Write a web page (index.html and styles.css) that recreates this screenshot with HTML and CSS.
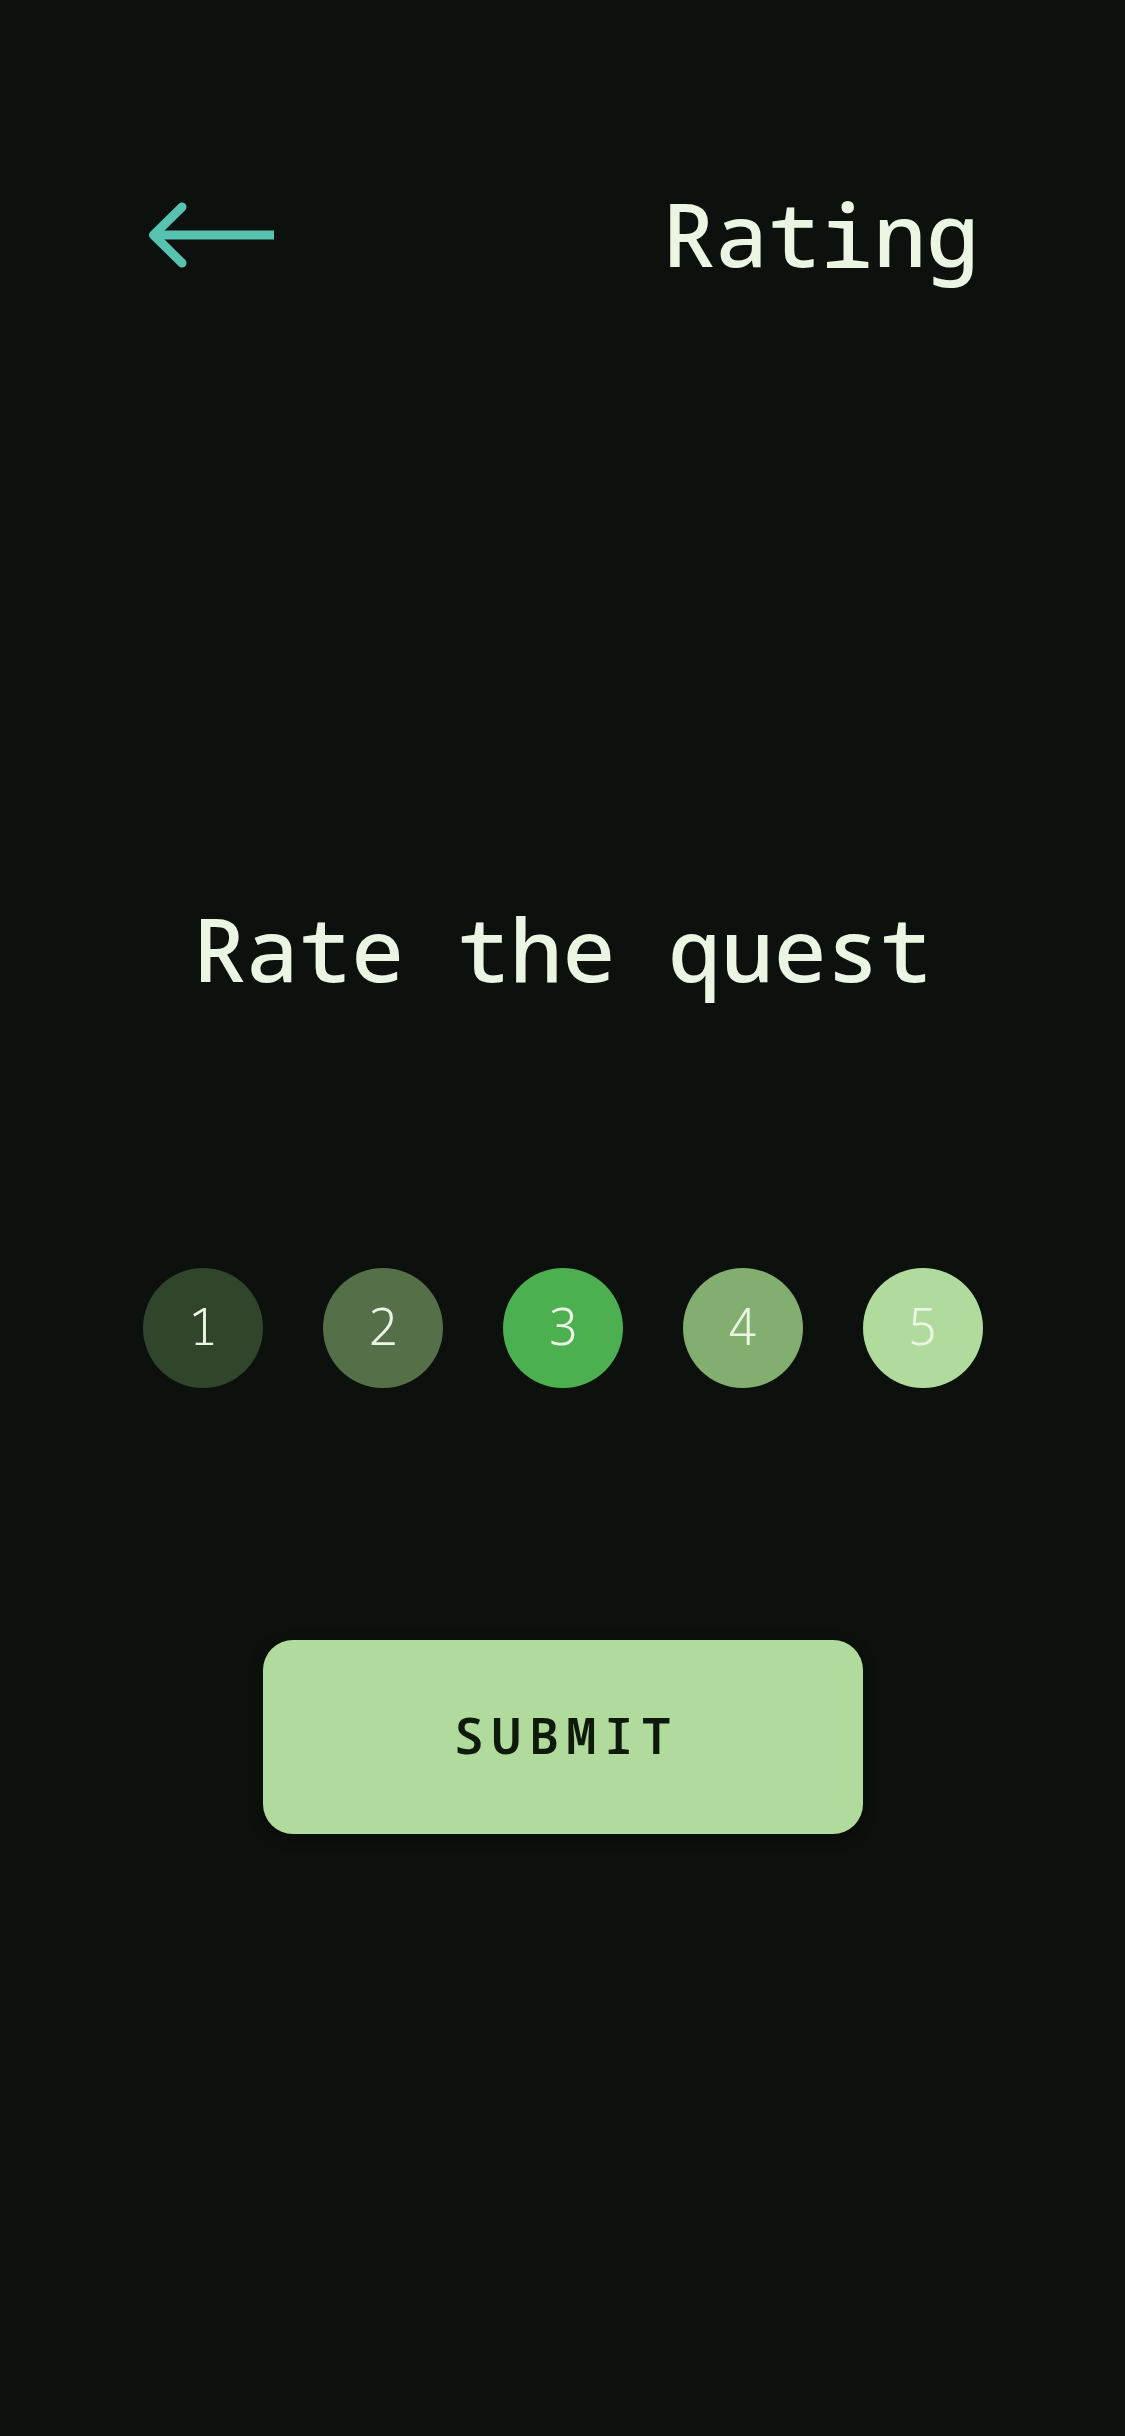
FILE: index.html
```html
<!DOCTYPE html>
<html lang="en">
<head>
<meta charset="utf-8">
<title>Rating</title>
<link rel="stylesheet" href="styles.css">
</head>
<body>
<div class="screen">
  <header class="header">
    <button class="back" aria-label="Back">
      <svg width="126" height="66" viewBox="0 0 126 66">
        <path d="M34 5 L5.5 33 L34 61" fill="none" stroke="#57c2b0" stroke-width="9" stroke-linecap="round" stroke-linejoin="round"/>
        <path d="M6 33 H126" fill="none" stroke="#57c2b0" stroke-width="9" stroke-linecap="butt"/>
      </svg>
    </button>
    <h1 class="title">Rating</h1>
  </header>
  <h2 class="prompt">Rate the quest</h2>
  <div class="scale">
    <div class="dot dot-1">1</div>
    <div class="dot dot-2">2</div>
    <div class="dot dot-3">3</div>
    <div class="dot dot-4">4</div>
    <div class="dot dot-5">5</div>
  </div>
  <button class="submit">SUBMIT</button>
</div>
</body>
</html>
```

FILE: styles.css
```css
html, body {
  margin: 0;
  padding: 0;
  background: #0d110d;
}
.screen {
  width: 1125px;
  height: 2436px;
  display: flex;
  flex-direction: column;
  align-items: center;
  font-family: "Noto Sans Mono", "DejaVu Sans Mono", monospace;
  color: #ebf5e4;
}
.header {
  width: 100%;
  box-sizing: border-box;
  margin-top: 189px;
  padding: 0 148px;
  height: 88px;
  display: flex;
  align-items: center;
  justify-content: space-between;
}
.back {
  display: flex;
  padding: 0;
  border: 0;
  background: none;
  margin-top: 4px;
}
.title {
  margin: 0 -2px 0 0;
  font-size: 88px;
  line-height: 88px;
  font-weight: 500;
}
.prompt {
  margin: 627px 0 0;
  font-size: 88px;
  line-height: 88px;
  font-weight: 500;
}
.scale {
  margin-top: 276px;
  display: flex;
  gap: 60px;
}
.dot {
  width: 120px;
  height: 120px;
  box-sizing: border-box;
  padding-bottom: 8px;
  border-radius: 50%;
  display: flex;
  align-items: center;
  justify-content: center;
  font-family: "Noto Sans Mono", "DejaVu Sans Mono", monospace;
  font-weight: 300;
  font-size: 52px;
  color: #ebf5e4;
}
.dot-1 { background: #31452d; }
.dot-2 { background: #557049; }
.dot-3 { background: #4caf50; }
.dot-4 { background: #82ae6f; }
.dot-5 { background: #b0db9c; }
.submit {
  margin-top: 252px;
  width: 600px;
  height: 194px;
  border: 0;
  border-radius: 30px;
  background: #b0db9c;
  box-shadow: 0 4px 14px rgba(0, 0, 0, 0.35);
  font-family: "Noto Sans Mono", "DejaVu Sans Mono", monospace;
  font-weight: 600;
  font-size: 50px;
  letter-spacing: 7.5px;
  padding: 0 0 5px 7.5px;
  color: #0f1a0c;
}
```
